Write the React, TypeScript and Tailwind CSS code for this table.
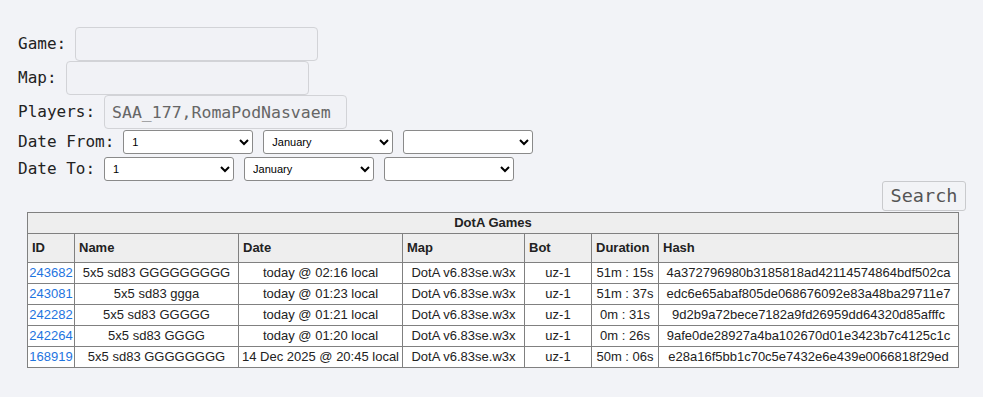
import React from 'react';

const games = [
  { id: '243682', name: '5x5 sd83 GGGGGGGGG', date: 'today @ 02:16 local', map: 'DotA v6.83se.w3x', bot: 'uz-1', duration: '51m : 15s', hash: '4a372796980b3185818ad42114574864bdf502ca' },
  { id: '243081', name: '5x5 sd83 ggga', date: 'today @ 01:23 local', map: 'DotA v6.83se.w3x', bot: 'uz-1', duration: '51m : 37s', hash: 'edc6e65abaf805de068676092e83a48ba29711e7' },
  { id: '242282', name: '5x5 sd83 GGGGG', date: 'today @ 01:21 local', map: 'DotA v6.83se.w3x', bot: 'uz-1', duration: '0m : 31s', hash: '9d2b9a72bece7182a9fd26959dd64320d85afffc' },
  { id: '242264', name: '5x5 sd83 GGGG', date: 'today @ 01:20 local', map: 'DotA v6.83se.w3x', bot: 'uz-1', duration: '0m : 26s', hash: '9afe0de28927a4ba102670d01e3423b7c4125c1c' },
  { id: '168919', name: '5x5 sd83 GGGGGGGG', date: '14 Dec 2025 @ 20:45 local', map: 'DotA v6.83se.w3x', bot: 'uz-1', duration: '50m : 06s', hash: 'e28a16f5bb1c70c5e7432e6e439e0066818f29ed' },
];

const headers = ['ID', 'Name', 'Date', 'Map', 'Bot', 'Duration', 'Hash'];

const TextRow = ({ label, value = '' }: { label: string; value?: string }) => (
  <div className="flex items-center gap-[9px] h-[34px]">
    <span className="text-[16px] text-[#222]">{label}</span>
    <input
      readOnly
      value={value}
      className="w-[243px] h-[34px] rounded-[4px] border border-[#d2d3d7] bg-[#f1f2f6] px-[7px] text-[16.5px] text-[#666] outline-none"
    />
  </div>
);

const DateRow = ({ label }: { label: string }) => (
  <div className="flex items-center gap-[10px] h-[24px]">
    <span className="text-[16px] text-[#222] mr-[-1px]">{label}</span>
    <select className="w-[130px] h-[24px] rounded-[3px] border border-[#8a8a8a] bg-white pl-[4px] font-['Liberation_Sans',sans-serif] text-[11px] text-black">
      <option>1</option>
    </select>
    <select className="w-[130px] h-[24px] rounded-[3px] border border-[#8a8a8a] bg-white pl-[4px] font-['Liberation_Sans',sans-serif] text-[11px] text-black">
      <option>January</option>
    </select>
    <select className="w-[130px] h-[24px] rounded-[3px] border border-[#8a8a8a] bg-white pl-[4px] font-['Liberation_Sans',sans-serif] text-[11px] text-black">
      <option></option>
    </select>
  </div>
);

const cell = 'border border-[#808080] py-[2px] px-[1px] leading-4 text-center whitespace-nowrap';

export default function App() {
  return (
    <div className="min-h-[397px] bg-[#f2f3f7] pt-[27px] pl-[18px] font-['DejaVu_Sans_Mono',monospace]">
      <TextRow label="Game:" />
      <TextRow label="Map:" />
      <TextRow label="Players:" value="SAA_177,RomaPodNasvaem" />
      <div className="mt-[1px]">
        <DateRow label="Date From:" />
      </div>
      <div className="mt-[3px]">
        <DateRow label="Date To:" />
      </div>
      <div className="w-[948px] flex justify-end">
        <button className="h-[30px] w-[84px] rounded-[3px] border border-[#c9cacd] bg-[#f2f3f6] text-[18.5px] text-[#555]">
          Search
        </button>
      </div>
      <table className="ml-[9px] mt-[1px] w-[931px] border-collapse table-fixed font-['Liberation_Sans',Arial,sans-serif] text-[13px] text-[#222]">
        <colgroup>
          <col className="w-[47px]" />
          <col className="w-[164px]" />
          <col className="w-[164px]" />
          <col className="w-[122px]" />
          <col className="w-[67px]" />
          <col className="w-[67px]" />
          <col className="w-[300px]" />
        </colgroup>
        <thead>
          <tr>
            <th colSpan={7} className="border border-[#808080] bg-[#eeeeee] py-[2px] leading-4 text-center font-bold">
              DotA Games
            </th>
          </tr>
          <tr>
            {headers.map((h) => (
              <th key={h} className="border border-[#808080] bg-[#eeeeee] py-[6px] pl-[4px] pr-0 leading-4 text-left font-bold whitespace-nowrap">
                {h}
              </th>
            ))}
          </tr>
        </thead>
        <tbody>
          {games.map((g) => (
            <tr key={g.id} className="bg-white">
              <td className={cell}>
                <a href="#" className="text-[#1e74e0]">{g.id}</a>
              </td>
              <td className={cell}>{g.name}</td>
              <td className={cell}>{g.date}</td>
              <td className={cell}>{g.map}</td>
              <td className={cell}>{g.bot}</td>
              <td className={cell}>{g.duration}</td>
              <td className={cell}>{g.hash}</td>
            </tr>
          ))}
        </tbody>
      </table>
    </div>
  );
}
